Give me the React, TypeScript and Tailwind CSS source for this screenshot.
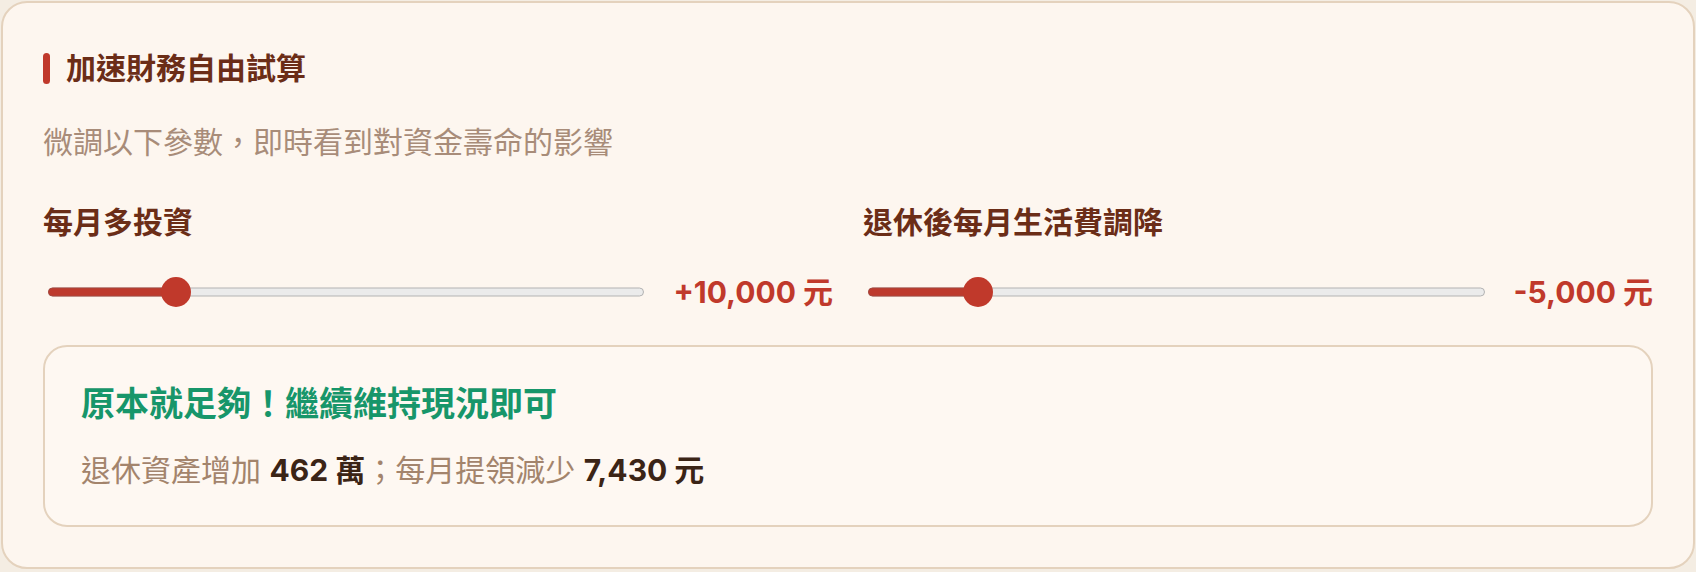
import React from "react";

function Slider({ pct }: { pct: number }) {
  return (
    <div className="relative mx-[5px] h-[30px] flex-1">
      <div className="absolute inset-x-0 top-1/2 h-[9px] -translate-y-1/2 rounded-full border-[1.5px] border-[#b3b3b3] bg-[#ebebeb]" />
      <div
        className="absolute left-0 top-1/2 h-[9px] -translate-y-1/2 rounded-full border border-[#a8473d] bg-[#bd3a2d]"
        style={{ width: `calc(15px + ${pct} * (100% - 30px))` }}
      />
      <div
        className="absolute top-0 h-[30px] w-[30px] rounded-full bg-[#c0392b]"
        style={{ left: `calc(${pct} * (100% - 30px))` }}
      />
    </div>
  );
}

function Control({ label, value, pct }: { label: string; value: string; pct: number }) {
  return (
    <div className="flex flex-col">
      <div className="text-[30px] font-bold leading-[48px] text-[#6b2d17]">{label}</div>
      <div className="mt-[22px] flex h-[48px] items-center gap-6">
        <Slider pct={pct} />
        <div className="whitespace-nowrap text-[30px] font-bold leading-[48px] text-[#c0392b]">{value}</div>
      </div>
    </div>
  );
}

export default function App() {
  return (
    <div className="min-h-[572px] w-full bg-[#f4ede3] p-px font-[Inter,'Noto_Sans_CJK_TC',sans-serif]">
      <div className="rounded-[26px] border-2 border-[#e4d2bd] bg-[#fdf6ef] px-10 pb-10 pt-10">
        <div className="flex h-[50px] items-center gap-4">
          <span className="h-[31px] w-[7px] rounded-full bg-[#c0392b]" />
          <h2 className="text-[30px] font-bold leading-[50px] text-[#6b2d17]">加速財務自由試算</h2>
        </div>
        <p className="mt-[25px] text-[30px] leading-[48px] text-[#a88c79]">
          微調以下參數，即時看到對資金壽命的影響
        </p>
        <div className="mt-[32px] grid grid-cols-2 gap-x-[30px]">
          <Control label="每月多投資" value="+10,000 元" pct={0.2} />
          <Control label="退休後每月生活費調降" value="-5,000 元" pct={0.1625} />
        </div>
        <div className="mt-[29px] rounded-[24px] border-2 border-[#e4d2bd] bg-[#fef8f2] px-9 pb-[31px] pt-[33px]">
          <div className="text-[34px] font-bold leading-[48px] text-[#17966a]">
            原本就足夠！繼續維持現況即可
          </div>
          <div className="mt-[18px] text-[30px] leading-[48px] text-[#a3846c]">
            退休資產增加 <span className="font-bold text-[#3b2416]">462 萬</span>；每月提領減少{" "}
            <span className="font-bold text-[#3b2416]">7,430 元</span>
          </div>
        </div>
      </div>
    </div>
  );
}
